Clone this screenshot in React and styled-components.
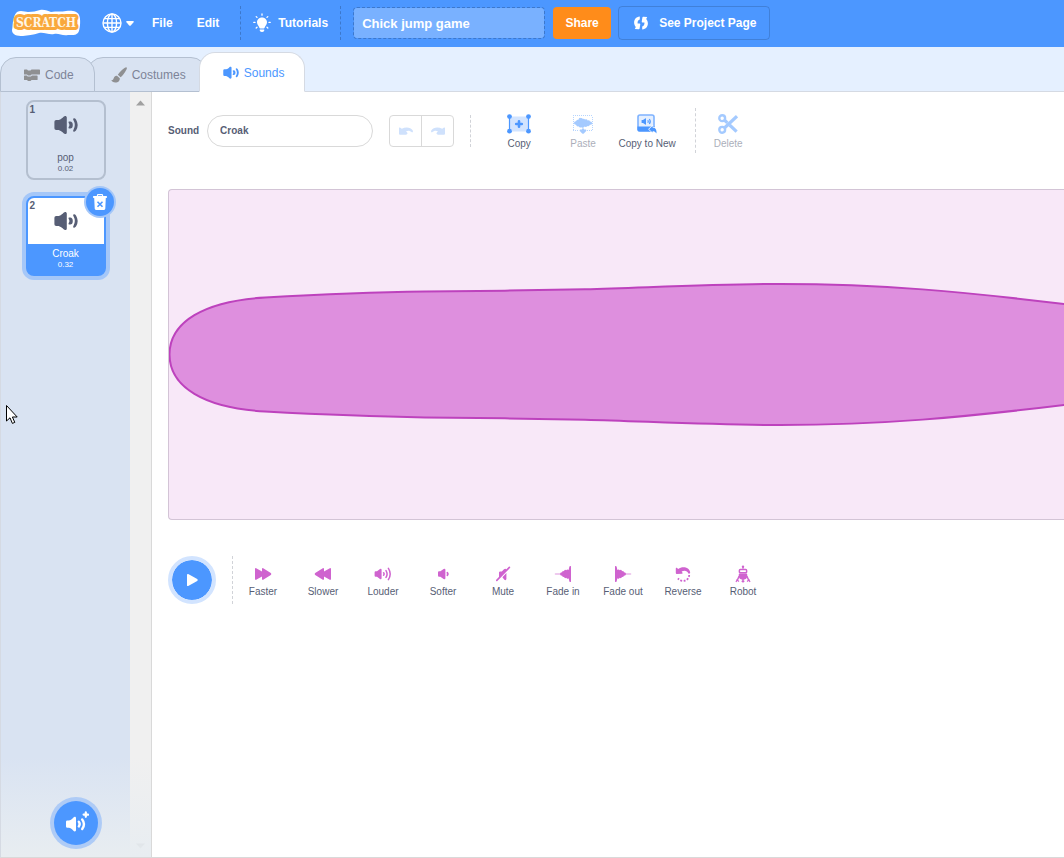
import React, { useState } from "react";
import styled, { createGlobalStyle } from "styled-components";

const GlobalStyle = createGlobalStyle`
	* {
		box-sizing: border-box;
	}
	body {
		margin: 0;
		overflow-x: hidden;
		background-color: white;
		color: #575e75;
		font-family: "Liberation Sans", Arial, sans-serif;
		font-size: 12px;
	}
	button,
	input {
		font-family: inherit;
		color: inherit;
		margin: 0;
	}
	button {
		border: none;
		padding: 0;
		background: none;
		cursor: pointer;
	}
	svg {
		display: block;
		flex-shrink: 0;
	}
`;

const Page = styled.div`
	display: flex;
	flex-direction: column;
	min-height: 100vh;
`;
const Header = styled.header`
	display: flex;
	align-items: center;
	height: 47px;
	padding: 0 0 1px 10px;
	background-color: #4c97ff;
	color: white;
	font-weight: bold;
`;
const LogoLink = styled.a`
	margin-right: 8px;
`;
const MenuButton = styled.button`
	display: flex;
	align-items: center;
	gap: 7px;
	height: 46px;
	padding: 0 12px;
	color: white;
	font-size: 12px;
	font-weight: bold;
`;
const LanguageButton = styled(MenuButton)`
	gap: 4px;
	padding-right: 6px;
`;
const HeaderDivider = styled.div`
	height: 34px;
	border-left: 1px dashed rgba(0, 0, 0, 0.2);
`;
const MenuGroup = styled.nav`
	display: flex;
	align-items: center;
	margin-right: 9px;
`;
const TitleInput = styled.input`
	width: 192px;
	height: 32px;
	margin-left: 12px;
	padding: 0 8px;
	border: 1px dashed rgba(0, 0, 0, 0.2);
	border-radius: 4px;
	outline: none;
	background-color: #79b1ff;
	background-clip: padding-box;
	color: white;
	font-size: 13px;
	font-weight: bold;
`;
const ShareButton = styled.button`
	width: 58px;
	height: 32px;
	margin: 0 7px 0 8px;
	border-radius: 4px;
	background-color: #ff8c1a;
	color: white;
	font-size: 12px;
	font-weight: bold;
`;
const ProjectPageButton = styled.button`
	display: flex;
	align-items: center;
	gap: 10px;
	height: 34px;
	padding: 0 12px 0 14px;
	border: 1px solid rgba(0, 0, 0, 0.15);
	border-radius: 4px;
	color: white;
	font-size: 12px;
	font-weight: bold;
`;

const TabList = styled.div`
	display: flex;
	align-items: flex-end;
	height: 45px;
	background-color: #e5f0ff;
	box-shadow: inset 0 -1px 0 #d5dae3;
`;
const Tab = styled.button`
	position: relative;
	z-index: ${(props) => props.$level};
	display: flex;
	align-items: center;
	gap: 5px;
	height: ${(props) => (props.$active ? 40 : 35)}px;
	padding: ${(props) => (props.$active ? 2 : 0)}px 20px 0 23px;
	border: 1px solid ${(props) => (props.$active ? "#d5dae3" : "#b4c0d1")};
	border-bottom-color: ${(props) => (props.$active ? "white" : "#b4c0d1")};
	border-radius: 16px 16px 0 0;
	background-color: ${(props) => (props.$active ? "white" : "#d9e3f2")};
	color: ${(props) => (props.$active ? "#4c97ff" : "#7d8397")};
	font-size: 12px;

	& + & {
		margin-left: -8px;
	}
`;

const Workspace = styled.div`
	display: flex;
	flex: 1;
	border-left: 1px solid #d5dae3;
	border-bottom: 1px solid #d9d9d9;
`;
const SoundPanel = styled.aside`
	position: relative;
	display: flex;
	width: 151px;
	flex-shrink: 0;
	border-right: 1px solid #d9d9d9;
	background-color: #d9e3f2;
`;
const SoundList = styled.ul`
	display: flex;
	flex: 1;
	flex-direction: column;
	align-items: center;
	gap: 16px;
	margin: 0;
	padding: 8px 0 100px;
	list-style: none;
`;
const SoundItem = styled.li`
	position: relative;
`;
const SoundTile = styled.button`
	display: flex;
	flex-direction: column;
	width: 80px;
	height: 80px;
	overflow: hidden;
	border: 2px solid ${(props) => (props.$selected ? "#4c97ff" : "#b4bfcf")};
	border-radius: 8px;
	background-color: ${(props) => (props.$selected ? "#4c97ff" : "transparent")};
	box-shadow: ${(props) => (props.$selected ? "0 0 0 4px #a5c7f8" : "none")};
	color: ${(props) => (props.$selected ? "white" : "#575e75")};
`;
const TilePreview = styled.span`
	display: flex;
	justify-content: center;
	width: 100%;
	height: 46px;
	padding-top: 13px;
	background-color: ${(props) => (props.$selected ? "white" : "transparent")};
`;
const TileNumber = styled.span`
	position: absolute;
	top: 4px;
	left: 4px;
	color: #575e75;
	font-size: 10px;
	font-weight: bold;
	line-height: 12px;
`;
const TileName = styled.span`
	width: 100%;
	padding-top: 4px;
	font-size: 10px;
	line-height: 12px;
`;
const TileLength = styled.span`
	width: 100%;
	font-size: 8px;
	line-height: 10px;
`;
const DeleteTileButton = styled.button`
	position: absolute;
	top: -8px;
	right: -8px;
	display: flex;
	align-items: center;
	justify-content: center;
	width: 28px;
	height: 28px;
	border-radius: 50%;
	background-color: #4c97ff;
	box-shadow: 0 0 0 2px #a5c7f8;
`;
const ScrollBar = styled.div`
	display: flex;
	flex-direction: column;
	align-items: center;
	justify-content: space-between;
	width: 21px;
	padding: 8px 0;
	background-color: #f0f0f0;
`;
const PanelFade = styled.div`
	position: absolute;
	right: 0;
	bottom: 0;
	left: 0;
	height: 100px;
	background: linear-gradient(rgba(232, 237, 241, 0), #e8edf1);
	pointer-events: none;
`;
const AddSoundButton = styled.button`
	position: absolute;
	bottom: 12px;
	left: 53px;
	display: flex;
	align-items: center;
	justify-content: center;
	width: 44px;
	height: 44px;
	border-radius: 50%;
	background-color: #4c97ff;
	box-shadow: 0 0 0 4px #aecbf6;
`;

const Editor = styled.main`
	flex: 1;
	min-width: 0;
	padding: 16px 0 16px 16px;
	background-color: white;
`;
const Toolbar = styled.div`
	display: flex;
	align-items: center;
	gap: 16px;
	height: 45px;
`;
const NameField = styled.div`
	display: flex;
	align-items: center;
	gap: 8px;
	font-size: 10px;
	font-weight: bold;
`;
const NameInput = styled.input`
	width: 166px;
	height: 32px;
	padding: 0 12px;
	border: 1px solid #d9d9d9;
	border-radius: 16px;
	outline: none;
	font-size: 10px;
	font-weight: bold;
`;
const HistoryGroup = styled.div`
	display: flex;
	width: 65px;
	height: 32px;
	border: 1px solid #d9d9d9;
	border-radius: 4px;
`;
const HistoryButton = styled.button`
	display: flex;
	flex: 1;
	align-items: center;
	justify-content: center;

	& + & {
		border-left: 1px solid #d9d9d9;
	}
`;
const Divider = styled.div`
	height: ${(props) => props.$height}px;
	border-left: 1px dashed #d1d3d8;
`;
const ToolGroup = styled.div`
	display: flex;
	align-items: center;
`;
const ToolButton = styled.button`
	display: flex;
	flex-direction: column;
	align-items: center;
	gap: 4px;
	width: 64px;
	padding-top: 2px;
	opacity: ${(props) => (props.disabled ? 0.5 : 1)};
	font-size: 10px;
	line-height: 12px;
	white-space: nowrap;
`;
const Waveform = styled.div`
	height: 331px;
	margin: 36px 0;
	overflow: hidden;
	border: 1px solid #d3c4d6;
	border-right: none;
	border-radius: 4px 0 0 4px;
	background-color: #f8e8f8;
`;
const EffectBar = styled.div`
	display: flex;
	align-items: center;
	height: 48px;
`;
const PlayButton = styled.button`
	display: flex;
	align-items: center;
	justify-content: center;
	width: 48px;
	height: 48px;
	margin-right: 16px;
	border: 4px solid #d2e4ff;
	border-radius: 50%;
	background-color: #4c97ff;
	background-clip: padding-box;
`;
const EffectButton = styled.button`
	display: flex;
	flex-direction: column;
	align-items: center;
	gap: 3px;
	width: 60px;
	padding-top: 3px;
	font-size: 10px;
	line-height: 12px;
`;
const Pointer = styled.svg`
	position: absolute;
	top: 404px;
	left: 5px;
	pointer-events: none;
`;

const PURPLE = "#cf63cf";
const BLUE = "#4c97ff";

const Logo = () => (
	<svg width="72" height="30" viewBox="10 8 72 30">
		<path
			d="M17 12 C21 10 25 12 28 12 C33 12 36 11 40 10 C44 9 48 11 51 12 C56 11 62 12 66 11 C71 10 78 11 79 15 C81 19 80 28 79 31 C77 36 72 35 68 35 C62 36 59 33 54 34 C49 35 44 32 39 33 C33 35 28 35 23 36 C17 36 12 35 12 30 C13 26 12 17 17 12 Z"
			fill="white"
		/>
		<text
			x="46"
			y="27"
			textAnchor="middle"
			fontFamily="'DejaVu Serif Condensed', 'DejaVu Serif', serif"
			fontSize="12"
			fill="#fff6e6"
			stroke="#f9a83c"
			strokeWidth="6"
			strokeLinejoin="round"
			paintOrder="stroke"
		>
			SCRATCH
		</text>
	</svg>
);

const GlobeIcon = () => (
	<svg width="20" height="20" viewBox="0 0 20 20" fill="none" stroke="white" strokeWidth="1.4">
		<circle cx="10" cy="10" r="9" />
		<ellipse cx="10" cy="10" rx="4.6" ry="9" />
		<path d="M10 1 V19 M1 10 H19 M2.3 5.6 H17.7 M2.3 14.4 H17.7" />
	</svg>
);

const CaretIcon = () => (
	<svg width="8" height="5" viewBox="0 0 8 5">
		<path d="M1 0 H7 Q8.4 .2 7.5 1.3 L4.8 4.5 Q4 5.2 3.2 4.5 L.5 1.3 Q-.4 .2 1 0 Z" fill="white" />
	</svg>
);

const BulbIcon = () => (
	<svg width="18" height="20" viewBox="0 0 18 20" fill="white">
		<path d="M9 4.4 C12 4.4 14 6.6 14 9.2 C14 11.7 12 12.7 11.6 14.8 Q11.5 15.6 10.7 15.6 H7.3 Q6.5 15.6 6.4 14.8 C6 12.7 4 11.7 4 9.2 C4 6.6 6 4.4 9 4.4 Z" />
		<path d="M6.8 16.4 H11.2 V17.4 Q10.8 19 9 19 Q7.2 19 6.8 17.4 Z" />
		<path
			d="M9 1 V2.2 M3.2 3.6 L4 4.4 M14.8 3.6 L14 4.4 M.8 9.4 H2 M16 9.4 H17.2 M3.2 15 L4 14.2 M14.8 15 L14 14.2"
			stroke="white"
			strokeWidth="1.3"
			strokeLinecap="round"
		/>
	</svg>
);

const ProjectIcon = () => (
	<svg width="16" height="16" viewBox="0 0 16 16" fill="white">
		<path d="M6.8 1.6 V4.4 C5 5 4.4 6.5 4.6 8.4 L6.6 8.6 Q7.5 8.8 7.2 9.8 L6.6 13.6 Q6.4 14.4 5.6 14.2 L1.8 14 L2.8 12 C-.2 8.8 .6 2.3 6.8 1.6 Z" />
		<path d="M9.2 14.4 V11.6 C11 11 11.6 9.5 11.4 7.6 L9.4 7.4 Q8.5 7.2 8.8 6.2 L9.4 2.4 Q9.6 1.6 10.4 1.8 L14.2 2 L13.2 4 C16.2 7.2 15.4 13.7 9.2 14.4 Z" />
	</svg>
);

const CodeIcon = () => (
	<svg width="16" height="16" viewBox="0 0 16 16" fill="#8f9092">
		<path d="M.6 2.6 H3 L4 3.6 H6.5 L7.5 2.6 H15.3 Q16 2.6 16 3.3 V6.9 Q16 7.6 15.3 7.6 H7.5 L6.5 8.6 H4 L3 7.6 H.6 Q0 7.6 0 6.9 V3.3 Q0 2.6 .6 2.6 Z" />
		<path d="M.6 8.4 H2.7 L3.7 9.4 H6.9 L7.9 8.4 H12.9 Q13.6 8.4 13.6 9.1 V12.4 Q13.6 13.1 12.9 13.1 H7.5 L6.5 14.1 H4 L3 13.1 H.6 Q0 13.1 0 12.4 V9.1 Q0 8.4 .6 8.4 Z" />
	</svg>
);

const BrushIcon = () => (
	<svg width="16" height="16" viewBox="0 0 16 16" fill="#8f9092">
		<path d="M15.6 .4 Q16.3 1.1 15.2 3 C13.6 6 11.5 8.8 9.6 10.2 L6.8 7.8 C8.3 5.6 10.8 3 13.5 1.1 Q15 0 15.6 .4 Z" />
		<path d="M6 8.7 L8.8 11.2 C9 14 6.8 15.6 4.3 15.5 C2.3 15.4 .8 14.4 .2 13.2 C1.6 13.4 2.3 12.8 2.7 11.3 C3.2 9.3 4.3 8.5 6 8.7 Z" />
	</svg>
);

// 24 x 20 speaker with two sound waves
const SpeakerIcon = ({ color, width }) => (
	<svg width={width} height={(width * 20) / 24} viewBox="0 0 24 20">
		<path
			d="M2.2 5 H4.6 C7 4.2 8.4 3 9.6 1.7 C10.8 .5 12.8 .8 12.8 2.6 V17.4 C12.8 19.2 10.8 19.5 9.6 18.3 C8.4 17 7 15.8 4.6 15 H2.2 Q.4 15 .4 13.2 V6.8 Q.4 5 2.2 5 Z"
			fill={color}
		/>
		<path
			d="M15 6.6 Q18.8 5.8 18.8 10 Q18.8 14.2 15 13.4 Q14 12.8 15 11.6 Q15.8 10 15 8.4 Q14 7.2 15 6.6 Z M19.4 3.6 Q20.6 2.6 22 4.4 Q25.4 10 22 15.6 Q20.6 17.4 19.4 16.4 Q18.8 15.6 19.6 14.4 Q22 10 19.6 5.6 Q18.8 4.4 19.4 3.6 Z"
			fill={color}
		/>
	</svg>
);

const AddSpeakerIcon = () => (
	<svg width="26" height="26" viewBox="0 0 26 26">
		<path
			d="M4.4 10.4 H6 C8.4 9.8 9.4 8.6 10.2 7.7 C11.4 6.3 13 6.6 13 8.2 V20 C13 21.6 11.4 21.9 10.2 20.5 C9.4 19.6 8.4 18.4 6 17.8 H4.4 Q3 17.8 3 16.4 V11.8 Q3 10.4 4.4 10.4 Z"
			fill="white"
		/>
		<path
			d="M15.8 11.8 Q17.6 14.1 15.8 16.4 M19.2 9.4 Q22.8 14.1 19.2 19"
			fill="none"
			stroke="white"
			strokeWidth="2.4"
			strokeLinecap="round"
		/>
		<path d="M22.8 2.4 V6.8 M20.6 4.6 H25" stroke="white" strokeWidth="2.2" strokeLinecap="round" />
	</svg>
);

const TrashIcon = () => (
	<svg width="14" height="16" viewBox="0 0 14 16">
		<path d="M4.4 2 V1.4 Q4.4 .6 5.2 .6 H8.8 Q9.6 .6 9.6 1.4 V2" fill="none" stroke="white" strokeWidth="1.1" />
		<path
			d="M.7 2 H13.3 Q14 2 14 2.7 V3.3 Q14 4 13.3 4 H12.8 L12.3 14.6 Q12.2 16 11 16 H3 Q1.8 16 1.7 14.6 L1.2 4 H.7 Q0 4 0 3.3 V2.7 Q0 2 .7 2 Z"
			fill="white"
		/>
		<path d="M4.5 7.8 L9.5 12.8 M9.5 7.8 L4.5 12.8" stroke={BLUE} strokeWidth="1.6" />
	</svg>
);

const ScrollArrow = ({ down }) => (
	<svg width="9" height="6" viewBox="0 0 9 6">
		<path d={down ? "M0 .5 H9 L4.5 5.5 Z" : "M0 5.5 H9 L4.5 .5 Z"} fill={down ? "#b4b4b4" : "#a0a0a0"} />
	</svg>
);

const UndoIcon = ({ flip }) => (
	<svg width="16" height="12" viewBox="0 0 16 12">
		<path
			d="M1 3.2 Q1 2 2 2.6 L3.8 3.8 C7.6 1.6 12.8 2 14.8 5.6 Q15.4 7.2 14.2 7.4 C11.8 5.4 9.8 5.4 8 6.4 L9.2 7.4 Q10 8.4 9 9.2 L8 9.8 H2 Q1 9.8 1 8.8 Z"
			fill="#cfe1fc"
			transform={flip ? "matrix(-1 0 0 1 16 0)" : undefined}
		/>
	</svg>
);

const CopyIcon = () => (
	<svg width="24" height="20" viewBox="0 0 24 20">
		<rect x="2.5" y="2.5" width="19" height="15" fill="#d2e4ff" />
		<path d="M2.5 2.5 V17.5 M21.5 2.5 V17.5" stroke={BLUE} strokeWidth="1.2" />
		<g fill={BLUE}>
			<circle cx="2.5" cy="2.6" r="2.4" />
			<circle cx="21.5" cy="2.6" r="2.4" />
			<circle cx="2.5" cy="17.2" r="2.4" />
			<circle cx="21.5" cy="17.2" r="2.4" />
		</g>
		<path d="M12 7.2 V12.8 M9.2 10 H14.8" stroke={BLUE} strokeWidth="2.6" strokeLinecap="round" />
	</svg>
);

const PasteIcon = () => (
	<svg width="20" height="20" viewBox="0 0 20 20">
		<path
			d="M0 1.5 H20 M.5 3 V17 M19.5 3 V17 M0 16.5 H6 M14 16.5 H20"
			stroke={BLUE}
			strokeOpacity=".8"
			strokeDasharray="1 1"
		/>
		<path
			d="M.8 9 Q1.6 7 3 7.2 Q3.6 5.2 5.4 5.8 Q6.2 3 8 4.2 Q9 3.8 9.8 5 Q11.2 4.2 12 5.6 Q14 4.6 14.6 6.6 Q16.4 5.6 17 7.4 Q18.8 7.2 19.2 9 Q18.8 11.2 17 10.8 Q16 12.8 14.4 12 Q13 13.8 11.6 12.6 Q10 14.6 8.4 13.2 Q6.6 14 5.6 12.2 Q3.8 13 3 10.8 Q1.6 11 .8 9 Z"
			fill={BLUE}
		/>
		<path d="M9 14.6 H11 V15.6 H12.8 Q13.8 16.2 13.2 17 L10.8 19.4 Q10 20 9.2 19.4 L6.8 17 Q6.2 16.2 7.2 15.6 H9 Z" fill={BLUE} />
	</svg>
);

const CopyNewIcon = () => (
	<svg width="20" height="20" viewBox="0 0 20 20">
		<rect x="1" y="1" width="16" height="16" rx="2" fill="#e4efff" stroke="#7fb3ff" strokeWidth="1.6" />
		<path d="M.4 12.6 H17.6 V15.4 Q17.6 17.6 15.4 17.6 H2.6 Q.4 17.6 .4 15.4 Z" fill={BLUE} />
		<path d="M4.6 6 H6 L8.6 4.2 Q9 4 9 4.6 V10.4 Q9 11 8.6 10.8 L6 9 H4.6 Z" fill={BLUE} />
		<path d="M10.8 6.2 Q11.8 7.5 10.8 8.8 M12.4 5 Q14.2 7.5 12.4 10" stroke={BLUE} strokeWidth="1.1" fill="none" />
		<path
			d="M15.6 12 V13.4 C18.6 13.6 20 16 19.4 19.6 C18.4 17.6 17.4 17.2 15.6 17.2 V18.6 L12 15.3 Z"
			fill={BLUE}
			stroke="white"
			strokeWidth="1.2"
			strokeLinejoin="round"
			paintOrder="stroke"
		/>
	</svg>
);

const DeleteIcon = () => (
	<svg width="20" height="20" viewBox="0 0 20 20" fill="none" stroke={BLUE}>
		<circle cx="4.2" cy="4.2" r="2.9" strokeWidth="2.4" />
		<circle cx="4.2" cy="15.8" r="2.9" strokeWidth="2.4" />
		<path d="M6.4 14 L19 2.2" strokeWidth="3.2" />
		<path d="M6.4 6 L9.4 8.8 M11.6 11 L18.6 17.6" strokeWidth="3.2" />
	</svg>
);

const PlayIcon = () => (
	<svg width="14" height="14" viewBox="0 0 14 14">
		<path d="M2 1.8 Q2 .6 3.2 1 L12.2 6 Q13.4 7 12.2 8 L3.2 13 Q2 13.4 2 12.2 Z" fill="white" />
	</svg>
);

const FastArrows = ({ flip }) => (
	<svg width="18" height="18" viewBox="0 0 18 18">
		<path
			d="M1 4.2 Q1 2.8 2.2 3.2 L8 6.4 V4.2 Q8 2.8 9.2 3.2 L16.8 8 Q18 9 16.8 10 L9.2 14.8 Q8 15.2 8 13.8 V11.6 L2.2 14.8 Q1 15.2 1 13.8 Z"
			fill={PURPLE}
			transform={flip ? "matrix(-1 0 0 1 18 0)" : undefined}
		/>
	</svg>
);

const LouderIcon = () => (
	<svg width="18" height="18" viewBox="0 0 18 18">
		<path d="M1.6 6.2 H3 L6 4 Q7.6 3.2 7.6 5 V13 Q7.6 14.8 6 14 L3 11.8 H1.6 Q.6 11.8 .6 10.6 V7.4 Q.6 6.2 1.6 6.2 Z" fill={PURPLE} />
		<path
			d="M9.6 7.8 Q10.6 9 9.6 10.2 M12 5.6 Q14.2 9 12 12.4 M14.4 3.4 Q18 9 14.4 14.6"
			fill="none"
			stroke={PURPLE}
			strokeWidth="1.5"
			strokeLinecap="round"
		/>
	</svg>
);

const SofterIcon = () => (
	<svg width="18" height="18" viewBox="0 0 18 18">
		<path d="M5 6.2 H6.4 L9.6 4 Q11.4 3.2 11.4 5 V13 Q11.4 14.8 9.6 14 L6.4 11.8 H5 Q4 11.8 4 10.6 V7.4 Q4 6.2 5 6.2 Z" fill={PURPLE} />
		<path d="M13.4 7.8 Q14.4 9 13.4 10.2" fill="none" stroke={PURPLE} strokeWidth="1.8" strokeLinecap="round" />
	</svg>
);

const MuteIcon = () => (
	<svg width="18" height="18" viewBox="0 0 18 18">
		<path
			d="M5 12.8 V7.6 Q5 6.4 6.2 6.4 H7.8 L10 4.2 Q11.8 3 12.6 5 Z M12.4 8 V14 Q12 15.8 10.4 14.8 L8.4 12.2 Z"
			fill={PURPLE}
		/>
		<path d="M2.8 15.4 L15.4 2.4" stroke={PURPLE} strokeWidth="1.6" strokeLinecap="round" />
	</svg>
);

const FadeIcon = ({ flip }) => (
	<svg width="18" height="18" viewBox="0 0 18 18">
		<g transform={flip ? "matrix(-1 0 0 1 18 0)" : undefined}>
			<path d="M1.5 9 H8" stroke="#e9b8e9" strokeWidth="1.6" strokeLinecap="round" />
			<path
				d="M6 9 Q6.4 7 8 7.4 Q8.4 5.4 10 6.2 Q10.6 4.2 12.2 5.2 Q13.4 3.8 14.6 5 L15.4 1.6 Q16 .8 17 1.2 V16.8 Q16 17.2 15.4 16.4 L14.6 13.2 Q13.4 14.4 12.2 12.8 Q10.6 13.8 10 11.8 Q8.4 12.6 8 10.6 Q6.4 11 6 9 Z"
				fill={PURPLE}
			/>
		</g>
	</svg>
);

const ReverseIcon = () => (
	<svg width="18" height="18" viewBox="0 0 18 18">
		<path d="M1.8 3.4 Q1.8 2.4 2.8 2.8 L4.2 4 C8.6 .8 15.6 2.4 16.2 7.6 Q16 9.2 14.4 8.6 C13.2 5.6 10.4 5 7.6 6.6 L8.4 7.4 Q9 8.6 8 8.8 L2.8 9 Q1.8 9 1.8 8 Z" fill={PURPLE} />
		<path
			d="M15.2 10 A6.2 6.2 0 0 1 4 13.4"
			fill="none"
			stroke={PURPLE}
			strokeWidth="1.8"
			strokeDasharray="1.9 1.5"
		/>
	</svg>
);

const RobotIcon = () => (
	<svg width="18" height="18" viewBox="0 0 18 18">
		<circle cx="9" cy="1.8" r="1.2" fill={PURPLE} />
		<path d="M9 2 V5" stroke={PURPLE} />
		<rect x="5.4" y="4.6" width="7.2" height="3.2" rx=".8" fill="white" stroke={PURPLE} strokeWidth="1.5" />
		<path d="M4.8 9.4 Q4.8 8.4 6 8.4 H12 Q13.2 8.4 13.2 9.4 V12 Q12.6 14.4 10.4 14.4 H7.6 Q5.4 14.4 4.8 12 Z" fill={PURPLE} />
		<path d="M5.2 11 L3.4 15 M12.8 11 L14.6 15 M9 14 V17.4" stroke={PURPLE} strokeWidth="1.5" />
		<path d="M2 17 L3 15 L5 16.4 M16 17 L15 15 L13 16.4 M7.6 16.4 H10.4" fill="none" stroke={PURPLE} strokeWidth="1.2" />
	</svg>
);

const SOUNDS = [
	{ name: "pop", length: "0.02" },
	{ name: "Croak", length: "0.32" },
];

const EFFECTS = [
	{ label: "Faster", icon: <FastArrows /> },
	{ label: "Slower", icon: <FastArrows flip /> },
	{ label: "Louder", icon: <LouderIcon /> },
	{ label: "Softer", icon: <SofterIcon /> },
	{ label: "Mute", icon: <MuteIcon /> },
	{ label: "Fade in", icon: <FadeIcon /> },
	{ label: "Fade out", icon: <FadeIcon flip /> },
	{ label: "Reverse", icon: <ReverseIcon /> },
	{ label: "Robot", icon: <RobotIcon /> },
];

function MenuBar() {
	const [title, updateTitle] = useState("Chick jump game");

	return (
		<Header>
			<LogoLink href="#" aria-label="Scratch">
				<Logo />
			</LogoLink>
			<MenuGroup>
				<LanguageButton aria-label="Language">
					<GlobeIcon />
					<CaretIcon />
				</LanguageButton>
				<MenuButton>File</MenuButton>
				<MenuButton>Edit</MenuButton>
			</MenuGroup>
			<HeaderDivider />
			<MenuButton>
				<BulbIcon />
				Tutorials
			</MenuButton>
			<HeaderDivider />
			<TitleInput
				type="text"
				aria-label="Project title"
				value={title}
				onChange={(e) => updateTitle(e.target.value)}
			/>
			<ShareButton>Share</ShareButton>
			<ProjectPageButton>
				<ProjectIcon />
				See Project Page
			</ProjectPageButton>
		</Header>
	);
}

function SoundSelector({ selected, onSelect }) {
	return (
		<SoundPanel>
			<SoundList>
				{SOUNDS.map((sound, index) => (
					<SoundItem key={sound.name}>
						<SoundTile $selected={index === selected} onClick={() => onSelect(index)}>
							<TileNumber>{index + 1}</TileNumber>
							<TilePreview $selected={index === selected}>
								<SpeakerIcon color="#575e75" width={24} />
							</TilePreview>
							<TileName>{sound.name}</TileName>
							<TileLength>{sound.length}</TileLength>
						</SoundTile>
						{index === selected && (
							<DeleteTileButton aria-label="Delete sound">
								<TrashIcon />
							</DeleteTileButton>
						)}
					</SoundItem>
				))}
			</SoundList>
			<ScrollBar>
				<ScrollArrow />
				<ScrollArrow down />
			</ScrollBar>
			<PanelFade />
			<AddSoundButton aria-label="Choose a sound">
				<AddSpeakerIcon />
			</AddSoundButton>
		</SoundPanel>
	);
}

function SoundEditor({ name, onNameChange }) {
	return (
		<Editor>
			<Toolbar>
				<NameField>
					<label htmlFor="soundName">Sound</label>
					<NameInput
						id="soundName"
						type="text"
						value={name}
						onChange={(e) => onNameChange(e.target.value)}
					/>
				</NameField>
				<HistoryGroup>
					<HistoryButton aria-label="Undo" disabled>
						<UndoIcon />
					</HistoryButton>
					<HistoryButton aria-label="Redo" disabled>
						<UndoIcon flip />
					</HistoryButton>
				</HistoryGroup>
				<Divider $height={32} />
				<ToolGroup>
					<ToolButton>
						<CopyIcon />
						Copy
					</ToolButton>
					<ToolButton disabled>
						<PasteIcon />
						Paste
					</ToolButton>
					<ToolButton>
						<CopyNewIcon />
						Copy to New
					</ToolButton>
				</ToolGroup>
				<ToolGroup>
					<Divider $height={45} />
					<ToolButton disabled>
						<DeleteIcon />
						Delete
					</ToolButton>
				</ToolGroup>
			</Toolbar>
			<Waveform>
				<svg width="100%" height="329" viewBox="169 190 895 329" preserveAspectRatio="none">
					<path
						d="M1080 306 C960 291 880 284 780 284 C710 284 650 287.5 585 289.3 C530 290.5 480 291 425 291.6 C400 292 340 293.5 265 297.5 C204 301 169.5 322 169.5 354.5 C169.5 387 204 408 265 411.5 C340 415.5 400 417 425 417.4 C480 418 530 418.5 585 419.7 C650 421.5 710 425 780 425 C880 425 960 418 1080 403 Z"
						fill="#de8fde"
						stroke="#bd42bd"
						strokeWidth="2"
					/>
				</svg>
			</Waveform>
			<EffectBar>
				<PlayButton aria-label="Play">
					<PlayIcon />
				</PlayButton>
				<Divider $height={48} />
				{EFFECTS.map((effect) => (
					<EffectButton key={effect.label}>
						{effect.icon}
						{effect.label}
					</EffectButton>
				))}
			</EffectBar>
		</Editor>
	);
}

function App() {
	const [selected, updateSelected] = useState(1);
	const [name, updateName] = useState("Croak");

	const onSelect = (index) => {
		updateSelected(index);
		updateName(SOUNDS[index].name);
	};

	return (
		<>
			<GlobalStyle />
			<Page>
				<MenuBar />
				<TabList role="tablist">
					<Tab role="tab" $level={2}>
						<CodeIcon />
						Code
					</Tab>
					<Tab role="tab" $level={1}>
						<BrushIcon />
						Costumes
					</Tab>
					<Tab role="tab" aria-selected="true" $level={3} $active>
						<SpeakerIcon color={BLUE} width={16} />
						Sounds
					</Tab>
				</TabList>
				<Workspace>
					<SoundSelector selected={selected} onSelect={onSelect} />
					<SoundEditor name={name} onNameChange={updateName} />
				</Workspace>
			</Page>
			<Pointer width="14" height="22" viewBox="0 0 14 22">
				<path
					d="M1.5 1.5 V17 L5 13.8 L7.4 19.4 L9.8 18.4 L7.4 13 H12.2 Z"
					fill="white"
					stroke="black"
					strokeLinejoin="round"
				/>
			</Pointer>
		</>
	);
}

export default App;
